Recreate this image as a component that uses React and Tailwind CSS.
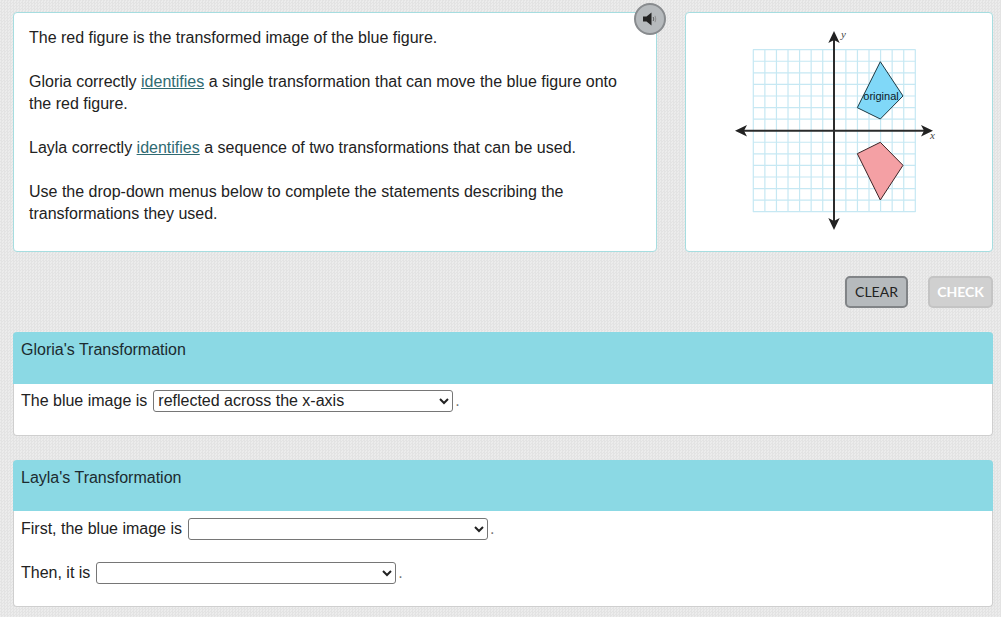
const sans = { fontFamily: '"Liberation Sans", Arial, sans-serif' };

function Graph() {
  const cell = 162 / 14;
  const lines = Array.from({ length: 15 }, (_, i) => i * cell);
  return (
    <svg width="308" height="240" viewBox="685 12 308 240" className="block">
      <g stroke="#c6e8f3" strokeWidth="1.2">
        {lines.map((d) => (
          <line key={"v" + d} x1={753.3 + d} x2={753.3 + d} y1="49.5" y2="212" />
        ))}
        {lines.map((d) => (
          <line key={"h" + d} y1={49.7 + d} y2={49.7 + d} x1="753" x2="915.5" />
        ))}
      </g>
      <polygon points="880.3,61.7 903,96 880.3,119 857.3,107.7" fill="#80d8f8" stroke="#1d3a44" strokeWidth="1" />
      <polygon points="880.3,142.3 903,165.3 880.3,200 857.3,153.7" fill="#f4a0a4" stroke="#3c2426" strokeWidth="1" />
      <g stroke="#2b2b2b" strokeWidth="2">
        <line x1="742" x2="926" y1="130.7" y2="130.7" />
        <line x1="834" x2="834" y1="38" y2="224" />
      </g>
      <g fill="#222">
        <path d="M735 130.7 L747 125 L744 130.7 L747 136.4 Z" />
        <path d="M933 130.7 L921 125 L924 130.7 L921 136.4 Z" />
        <path d="M834 31 L828.3 43 L834 40 L839.7 43 Z" />
        <path d="M834 230 L828.3 218 L834 221 L839.7 218 Z" />
      </g>
      <text x="881" y="100" textAnchor="middle" fontSize="11" fill="#0c2027" style={sans}>
        original
      </text>
      <text x="841" y="38" fontSize="11" fontStyle="italic" fill="#444" fontFamily="Liberation Serif, serif">
        y
      </text>
      <text x="930" y="139" fontSize="11" fontStyle="italic" fill="#444" fontFamily="Liberation Serif, serif">
        x
      </text>
    </svg>
  );
}

function SpeakerIcon() {
  return (
    <svg width="18" height="18" viewBox="0 0 18 18">
      <path d="M2 6.5 H5.5 L10.5 2.5 V15.5 L5.5 11.5 H2 Z" fill="#222" />
      <path d="M12.2 7 Q13.4 9 12.2 11" fill="none" stroke="#555" strokeWidth="0.9" />
      <path d="M14 5.8 Q15.6 9 14 12.2" fill="none" stroke="#888" strokeWidth="0.9" />
    </svg>
  );
}

function Dropdown({ value, width }) {
  return (
    <select
      defaultValue={value || ""}
      style={{ appearance: "auto", ...sans }}
      className={`h-[22px] ${width} rounded-[3px] border border-[#767676] bg-white pb-[2px] text-base leading-none text-[#222]`}
    >
      <option value=""></option>
      <option value="reflected across the x-axis">reflected across the x-axis</option>
      <option value="reflected across the y-axis">reflected across the y-axis</option>
      <option value="rotated 180° about the origin">rotated 180° about the origin</option>
    </select>
  );
}

function Panel({ title, headClass, bodyClass, children }) {
  return (
    <section className="rounded-[4px] border border-t-0 border-[#cfcfcf] bg-white">
      <h2 className={`${headClass} rounded-t-[4px] bg-[#8bd9e4] -mx-px px-[8px] pt-[7px] text-base leading-[22px] font-normal text-[#1c2b30]`}>
        {title}
      </h2>
      <div className={bodyClass}>{children}</div>
    </section>
  );
}

function Row({ label, children }) {
  return (
    <div className="flex h-[22px] items-center text-base text-[#222]">
      <span className="mr-[6px]">{label}</span>
      {children}
      <span className="ml-[2px] text-[#777]">.</span>
    </div>
  );
}

export default function App() {
  return (
    <div
      style={sans}
      className="relative h-[617px] w-[1001px] overflow-hidden bg-[#e7e7e7] bg-[repeating-conic-gradient(#e3e3e3_0_25%,#ececec_0_50%)] bg-[length:3px_3px] pt-[12px] pr-[8px] pl-[13px]"
    >
      <div className="flex gap-[28px]">
        <div className="relative h-[240px] w-[644px] rounded-[4px] border border-[#a6dde0] bg-white px-[15px] pt-[14px] text-base leading-[22px] text-[#222]">
          <p>The red figure is the transformed image of the blue figure.</p>
          <p className="mt-[22px]">
            Gloria correctly <a href="#" className="text-[#2f6a72] underline">identifies</a> a single transformation that can move the blue figure onto the red figure.
          </p>
          <p className="mt-[22px]">
            Layla correctly <a href="#" className="text-[#2f6a72] underline">identifies</a> a sequence of two transformations that can be used.
          </p>
          <p className="mt-[22px]">
            Use the drop-down menus below to complete the statements describing the transformations they used.
          </p>
          <button className="absolute top-[-10px] right-[-10px] flex h-[32px] w-[32px] items-center justify-center rounded-full border-2 border-[#888b8e] bg-[#b6babd]">
            <SpeakerIcon />
          </button>
        </div>
        <div className="h-[240px] w-[308px] overflow-hidden rounded-[4px] border border-[#a6dde0] bg-white">
          <div className="-m-px">
            <Graph />
          </div>
        </div>
      </div>

      <div className="mt-[24px] flex justify-end gap-[20px]">
        <button
          style={{ fontFamily: 'Lato, sans-serif' }}
          className="h-[32px] w-[63px] rounded-[5px] border-2 border-[#818487] bg-[#b6babd] pb-[1px] text-[14px] text-[#222]"
        >
          CLEAR
        </button>
        <button
          style={{ fontFamily: 'Lato, sans-serif' }}
          className="h-[32px] w-[65px] rounded-[5px] border-2 border-[#c4c4c4] bg-[#d0d0d0] pb-[1px] text-[14px] font-bold text-white"
        >
          CHECK
        </button>
      </div>

      <div className="mt-[24px] flex flex-col gap-[24px]">
        <Panel title="Gloria's Transformation" headClass="h-[52px]" bodyClass="h-[51px] px-[7px] pt-[6px]">
          <Row label="The blue image is">
            <Dropdown value="reflected across the x-axis" width="w-[300px]" />
          </Row>
        </Panel>
        <Panel title="Layla's Transformation" headClass="h-[51px]" bodyClass="flex h-[95px] flex-col gap-[22px] px-[7px] pt-[7px]">
          <Row label="First, the blue image is">
            <Dropdown width="w-[300px]" />
          </Row>
          <Row label="Then, it is">
            <Dropdown width="w-[300px]" />
          </Row>
        </Panel>
      </div>
    </div>
  );
}
